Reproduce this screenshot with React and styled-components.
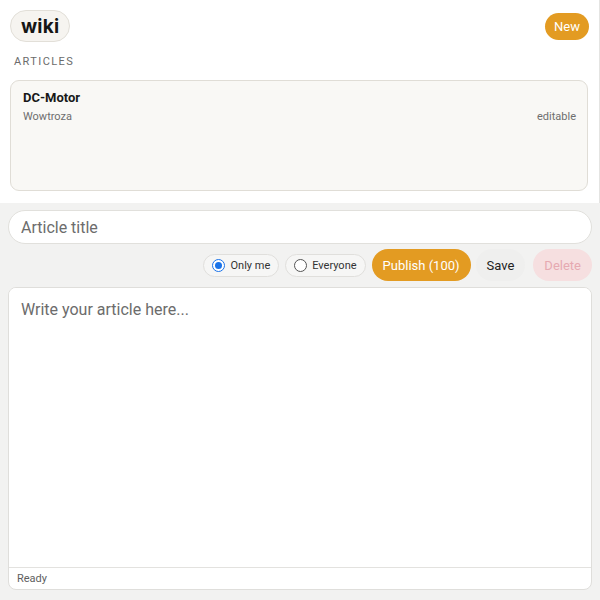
import React from "react";
import styled, { createGlobalStyle } from "styled-components";

const Global = createGlobalStyle`
  html, body { margin: 0; padding: 0; background: #f2f2f1; }
  body { font-family: Roboto, "Noto Sans", "Liberation Sans", sans-serif; color: #1d1d1d; }
  * { box-sizing: border-box; }
`;

const Page = styled.div`
  width: 600px;
  height: 600px;
  display: flex;
  flex-direction: column;
  background: #f2f2f1;
`;

const TopPanel = styled.section`
  background: #ffffff;
  border-right: 1px solid #e4e4e2;
  width: 600px;
  padding: 10px 10px 12px 10px;
  display: flex;
  flex-direction: column;
`;

const Header = styled.div`
  display: flex;
  align-items: center;
  justify-content: space-between;
`;

const Brand = styled.div`
  height: 32px;
  padding: 0 10px;
  border-radius: 16px;
  background: #f6f4f0;
  border: 1px solid #e2dfd8;
  font-family: Inter, Roboto, sans-serif;
  font-weight: 700;
  font-size: 19px;
  letter-spacing: 0.2px;
  display: flex;
  align-items: center;
  color: #161616;
`;

const NewButton = styled.button`
  height: 27px;
  padding: 0 9px;
  border: none;
  border-radius: 14px;
  background: #e39b22;
  color: #fff;
  font-family: Roboto, sans-serif;
  font-size: 13px;
`;

const SectionLabel = styled.div`
  margin: 13px 0 0 4px;
  font-size: 11px;
  letter-spacing: 1.4px;
  color: #6b6b6b;
  height: 13px;
  line-height: 13px;
`;

const Card = styled.div`
  margin-top: 12px;
  margin-right: 1px;
  height: 111px;
  border-radius: 9px;
  border: 1px solid #e0ddd6;
  background: #f9f8f5;
  padding: 9px 11px 0 12px;
`;

const CardTitle = styled.div`
  font-family: Roboto, sans-serif;
  font-weight: 700;
  font-size: 13px;
  color: #181818;
  line-height: 16px;
`;

const CardMeta = styled.div`
  display: flex;
  justify-content: space-between;
  margin-top: 3px;
  font-size: 11px;
  color: #6e6e6e;
  line-height: 16px;
`;

const BottomPanel = styled.section`
  flex: 1;
  padding: 7px 8px 10px 8px;
  display: flex;
  flex-direction: column;
  gap: 5px;
`;

const TitleInput = styled.input`
  height: 34px;
  border-radius: 17px;
  border: 1px solid #e1e0dc;
  background: #fff;
  padding: 0 12px;
  font-family: Roboto, sans-serif;
  font-size: 16px;
  color: #222;
  outline: none;
  &::placeholder { color: #6c6c6c; }
`;

const Actions = styled.div`
  display: flex;
  justify-content: flex-end;
  align-items: center;
  height: 32px;
`;

const RadioPill = styled.label`
  height: 23px;
  display: flex;
  align-items: center;
  gap: 5px;
  padding: 0 8px;
  margin-right: 6px;
  border-radius: 12px;
  border: 1px solid #e0dfdc;
  background: #f6f6f5;
  font-size: 11px;
  color: #333;
`;

const RadioDot = styled.span`
  width: 13px;
  height: 13px;
  border-radius: 50%;
  border: ${p => (p.$on ? "1.5px solid #1a73e8" : "1px solid #555")};
  background: #fff;
  display: flex;
  align-items: center;
  justify-content: center;
  &::after {
    content: "";
    width: 7px;
    height: 7px;
    border-radius: 50%;
    background: ${p => (p.$on ? "#1a73e8" : "transparent")};
  }
`;

const Button = styled.button`
  height: 32px;
  border: none;
  border-radius: 16px;
  padding: 0 ${p => p.$pad || 11}px;
  margin-left: ${p => p.$gap || 0}px;
  font-family: Roboto, sans-serif;
  font-size: 13px;
  background: ${p => p.$bg};
  color: ${p => p.$fg};
`;

const Editor = styled.div`
  flex: 1;
  margin-top: 1px;
  background: #fff;
  border: 1px solid #dfdedb;
  border-radius: 8px;
  display: flex;
  flex-direction: column;
  overflow: hidden;
`;

const TextArea = styled.textarea`
  flex: 1;
  border: none;
  resize: none;
  outline: none;
  padding: 12px 12px;
  font-family: Roboto, sans-serif;
  font-size: 16px;
  line-height: 20px;
  &::placeholder { color: #6c6c6c; }
`;

const StatusBar = styled.div`
  height: 22px;
  border-top: 1px solid #e3e2df;
  padding: 0 8px;
  display: flex;
  align-items: center;
  font-size: 11px;
  color: #5e5e5e;
`;

export default function App() {
  return (
    <Page>
      <Global />
      <TopPanel>
        <Header>
          <Brand>wiki</Brand>
          <NewButton>New</NewButton>
        </Header>
        <SectionLabel>ARTICLES</SectionLabel>
        <Card>
          <CardTitle>DC-Motor</CardTitle>
          <CardMeta>
            <span>Wowtroza</span>
            <span>editable</span>
          </CardMeta>
        </Card>
      </TopPanel>
      <BottomPanel>
        <TitleInput placeholder="Article title" />
        <Actions>
          <RadioPill>
            <RadioDot $on />
            Only me
          </RadioPill>
          <RadioPill>
            <RadioDot />
            Everyone
          </RadioPill>
          <Button $bg="#e39b22" $fg="#fff">Publish (100)</Button>
          <Button $gap={5} $pad={11} $bg="#efefee" $fg="#222">Save</Button>
          <Button $gap={8} $pad={11} $bg="#f6dfe0" $fg="#e6a9b1">Delete</Button>
        </Actions>
        <Editor>
          <TextArea placeholder="Write your article here..." />
          <StatusBar>Ready</StatusBar>
        </Editor>
      </BottomPanel>
    </Page>
  );
}
